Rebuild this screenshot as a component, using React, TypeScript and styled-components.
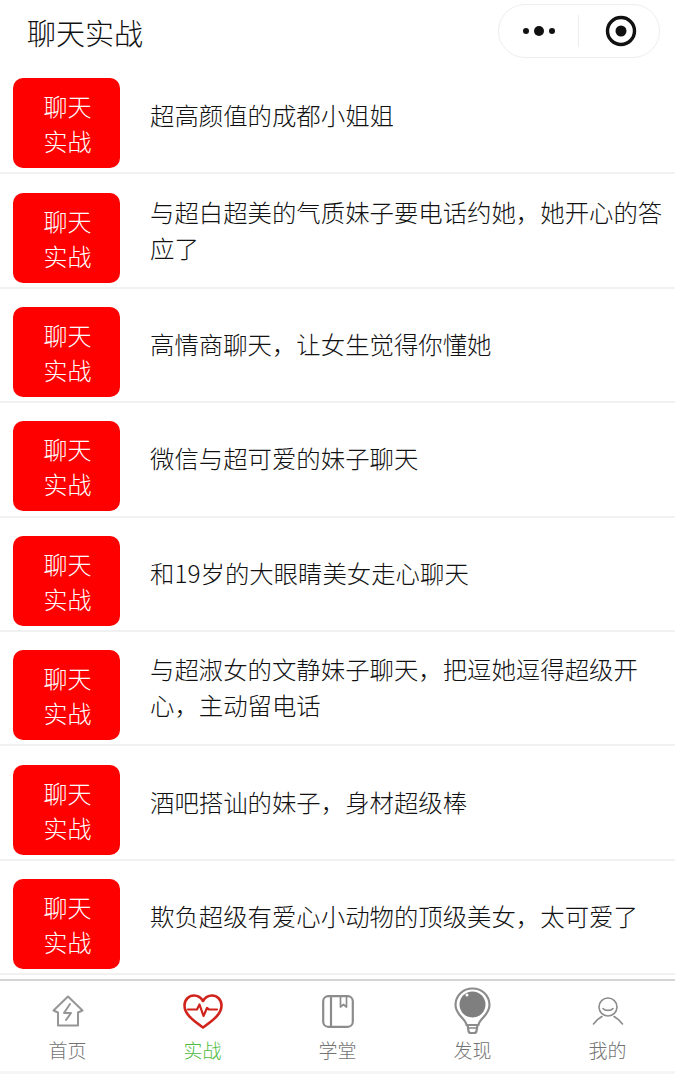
import React from 'react'
import styled, { createGlobalStyle } from 'styled-components'

const GlobalStyle = createGlobalStyle`
  html, body {
    margin: 0;
    padding: 0;
    background: #fff;
    font-family: "Noto Sans CJK SC", "Noto Sans", sans-serif;
  }
`

const Screen = styled.div`
  width: 675px;
  height: 1074px;
  display: flex;
  flex-direction: column;
  overflow: hidden;
  background: #fff;
`

const NavBar = styled.header`
  height: 60px;
  flex: none;
  display: flex;
  align-items: center;
  justify-content: space-between;
  padding: 0 15px 0 27px;
`

const NavTitle = styled.h1`
  margin: 0 0 -3px;
  font-size: 29px;
  line-height: 40px;
  font-weight: 300;
  color: #111;
`

const Capsule = styled.div`
  width: 162px;
  height: 54px;
  box-sizing: border-box;
  margin-top: 2px;
  display: flex;
  align-items: center;
  border: 1px solid #eee;
  border-radius: 27px;
  background: #fff;
`

const CapsuleSlot = styled.div<{ $width?: number; $shift?: number }>`
  flex: ${p => (p.$width ? `0 0 ${p.$width}px` : '1')};
  height: 100%;
  box-sizing: border-box;
  padding-left: ${p => p.$shift ?? 0}px;
  display: flex;
  align-items: center;
  justify-content: center;
`

const CapsuleLine = styled.div`
  width: 1px;
  height: 32px;
  background: #ececec;
`

const List = styled.main`
  flex: 1;
  min-height: 0;
  overflow: hidden;
`

const Row = styled.article`
  height: 114.4px;
  box-sizing: border-box;
  padding: 18px 10px 4px 13px;
  display: flex;
  align-items: center;
  border-bottom: 2px solid #f1f1f1;
`

const Badge = styled.div`
  width: 107px;
  height: 90px;
  flex: none;
  box-sizing: border-box;
  padding: 10px 0 0 2px;
  border-radius: 10px;
  background: #fe0000;
  color: #fff;
  font-size: 24px;
  font-weight: 300;
  line-height: 35px;
  text-align: center;
`

const RowText = styled.p`
  margin: 0 0 16px 30px;
  font-size: 24.4px;
  font-weight: 300;
  line-height: 36px;
  color: #111;
`

const TabBar = styled.nav`
  flex: none;
  height: 95px;
  box-sizing: border-box;
  display: flex;
  border-top: 2px solid #d4d4d4;
  border-bottom: 3px solid #f5f5f5;
  background: #fff;
`

const Tab = styled.div`
  flex: 1;
  display: flex;
  flex-direction: column;
  align-items: center;
  padding-top: 6px;
`

const TabIcon = styled.div`
  height: 48px;
  display: flex;
  align-items: center;
  justify-content: center;
`

const TabLabel = styled.span<{ $active?: boolean }>`
  margin-top: 3px;
  font-size: 19px;
  font-weight: 300;
  line-height: 24px;
  color: ${p => (p.$active ? '#4fbb42' : '#737373')};
`

const HomeIcon = () => (
  <svg width="32" height="32" viewBox="0 0 32 32" fill="none" stroke="#969696" strokeWidth="2" strokeLinejoin="round" strokeLinecap="round">
    <path d="M16 1.5 30.5 15.5 26 17.5V30.5H6V17.5L1.5 15.5Z" />
    <path d="M18 9 12 18H19L14 25" />
  </svg>
)

const HeartIcon = () => (
  <svg width="40" height="35" viewBox="0 0 40 35" fill="none" stroke="#d0231c" strokeLinejoin="round" strokeLinecap="round">
    <path strokeWidth="2.6" d="M20 33.5C12 27.5 1.5 21 1.5 11.5 1.5 5.5 6 1.5 11 1.5 15 1.5 18 3.5 20 7 22 3.5 25 1.5 29 1.5 34 1.5 38.5 5.5 38.5 11.5 38.5 21 28 27.5 20 33.5Z" />
    <path strokeWidth="2.2" d="M5 15.5H14L16.5 10.5 20.5 22 24 14 26 15.5H34" />
  </svg>
)

const BookIcon = () => (
  <svg width="32" height="33" viewBox="0 0 32 33" fill="none" stroke="#8c8c8c" strokeWidth="2.2" strokeLinejoin="round">
    <rect x="1.2" y="1.2" width="29.6" height="30.6" rx="5" />
    <path d="M9 1.2V31.8" />
    <path strokeWidth="1.7" d="M18.5 1.5V12L21.5 9.5 24.5 12V1.5" />
  </svg>
)

const BulbIcon = () => (
  <svg width="37" height="48" viewBox="0 0 37 48" fill="none" stroke="#8c8c8c" strokeWidth="2.2" strokeLinejoin="round">
    <path d="M12.5 38C12 32 1.5 28 1.5 18 1.5 8.5 9 1.5 18.5 1.5 28 1.5 35.5 8.5 35.5 18 35.5 28 25 32 24.5 38Z" />
    <path d="M13.5 38 14.5 44C14.7 45.5 15.5 46 17 46H20C21.5 46 22.3 45.5 22.5 44L23.5 38" />
    <path d="M13 41H24" strokeWidth="1.6" />
    <circle cx="18.5" cy="17.5" r="13" fill="#7f7f7f" stroke="none" />
    <circle cx="13" cy="8" r="1.5" fill="#fff" stroke="none" />
  </svg>
)

const UserIcon = () => (
  <svg width="32" height="28" viewBox="0 0 32 28" fill="none" stroke="#8c8c8c" strokeWidth="1.6" strokeLinecap="round">
    <circle cx="16" cy="10" r="9" />
    <path d="M11 11.5C13 14 19 14 21 11.5" />
    <path d="M1.5 27C4 23.5 7 21 10 19.5" />
    <path d="M30.5 27C28 23.5 25 21 22 19.5" />
  </svg>
)

const items = [
  '超高颜值的成都小姐姐',
  '与超白超美的气质妹子要电话约她，她开心的答应了',
  '高情商聊天，让女生觉得你懂她',
  '微信与超可爱的妹子聊天',
  '和19岁的大眼睛美女走心聊天',
  '与超淑女的文静妹子聊天，把逗她逗得超级开心，主动留电话',
  '酒吧搭讪的妹子，身材超级棒',
  '欺负超级有爱心小动物的顶级美女，太可爱了',
]

const tabs = [
  { label: '首页', icon: <HomeIcon /> },
  { label: '实战', icon: <HeartIcon />, active: true },
  { label: '学堂', icon: <BookIcon /> },
  { label: '发现', icon: <BulbIcon /> },
  { label: '我的', icon: <UserIcon /> },
]

const App: React.FC = () => {
  return (
    <Screen>
      <GlobalStyle />
      <NavBar>
        <NavTitle>聊天实战</NavTitle>
        <Capsule>
          <CapsuleSlot $width={79}>
            <svg width="34" height="12" viewBox="0 0 34 12" fill="#111">
              <circle cx="4" cy="6" r="3" />
              <circle cx="17" cy="6" r="5" />
              <circle cx="30" cy="6" r="3" />
            </svg>
          </CapsuleSlot>
          <CapsuleLine />
          <CapsuleSlot $shift={3}>
            <svg width="32" height="32" viewBox="0 0 32 32">
              <circle cx="16" cy="16" r="13.5" fill="none" stroke="#111" strokeWidth="3.4" />
              <circle cx="16" cy="16" r="5.5" fill="#111" />
            </svg>
          </CapsuleSlot>
        </Capsule>
      </NavBar>

      <List>
        {items.map(text => (
          <Row key={text}>
            <Badge>
              聊天
              <br />
              实战
            </Badge>
            <RowText>{text}</RowText>
          </Row>
        ))}
      </List>

      <TabBar>
        {tabs.map(tab => (
          <Tab key={tab.label}>
            <TabIcon>{tab.icon}</TabIcon>
            <TabLabel $active={tab.active}>{tab.label}</TabLabel>
          </Tab>
        ))}
      </TabBar>
    </Screen>
  )
}

export default App
